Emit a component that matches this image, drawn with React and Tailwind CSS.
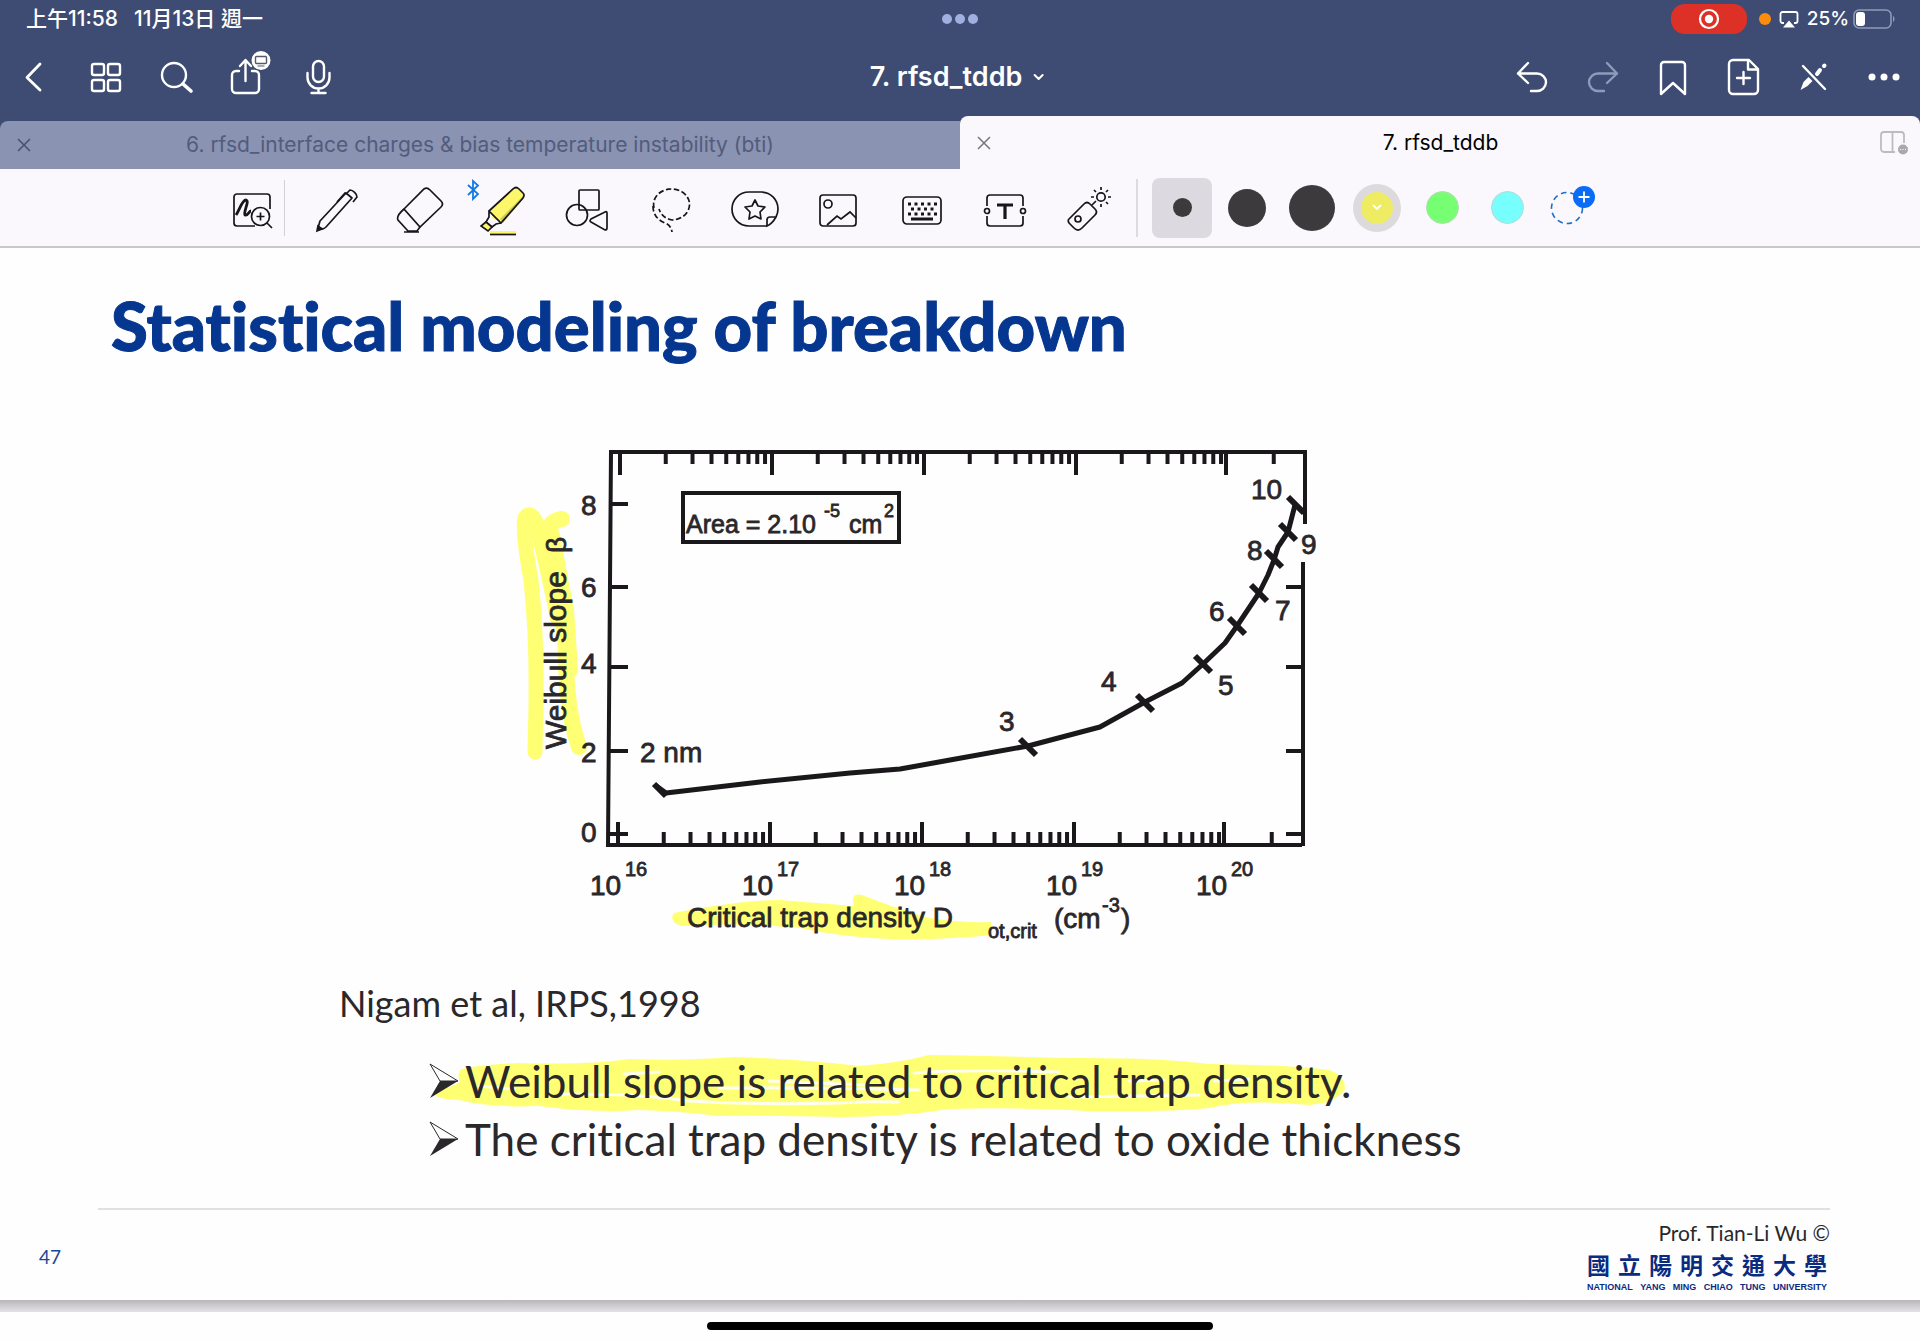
import React from "react";

const INK = "#1b181c";

/* ---------- Status bar ---------- */

function StatusBar() {
  return (
    <div className="relative flex h-[38px] items-center justify-between pl-[26px] pr-[24px] text-[19px] font-medium text-white">
      <div className="flex gap-[16px] text-[21px]">
        <span>上午11:58</span>
        <span>11月13日 週一</span>
      </div>
      <div className="absolute inset-x-0 top-[14px] flex justify-center gap-[3px]">
        <span className="size-[10px] rounded-full bg-[#9fb0e0]" />
        <span className="size-[10px] rounded-full bg-[#9fb0e0]" />
        <span className="size-[10px] rounded-full bg-[#9fb0e0]" />
      </div>
      <div className="flex items-center">
        <span className="flex h-[30px] w-[76px] items-center justify-center rounded-[14px] bg-[#dd3127]">
          <svg width="22" height="22" viewBox="0 0 22 22" aria-label="Recording">
            <circle cx="11" cy="11" r="9" fill="none" stroke="#fff" strokeWidth="2.2" />
            <circle cx="11" cy="11" r="4.2" fill="#fff" />
          </svg>
        </span>
        <span className="ml-[12px] size-[12px] rounded-full bg-[#fb8c0c]" />
        <svg className="ml-[8px]" width="20" height="18" viewBox="0 0 20 18" aria-hidden="true">
          <path d="M5 13H3.5A2 2 0 0 1 1.5 11V4a2 2 0 0 1 2-2h13a2 2 0 0 1 2 2v7a2 2 0 0 1-2 2H15" fill="none" stroke="#fff" strokeWidth="1.8" />
          <path d="M10 10.5 16 17.500H4Z" fill="#fff" />
        </svg>
        <span className="ml-[8px]">25%</span>
        <svg className="ml-[4px]" width="43" height="20" viewBox="0 0 43 20" aria-label="Battery">
          <rect x="1" y="1" width="37" height="18" rx="5" fill="none" stroke="#8f9ab9" strokeWidth="1.6" />
          <rect x="3" y="3" width="9" height="14" rx="3" fill="#fff" />
          <path d="M40 7c2 1 2 5 0 6Z" fill="#8f9ab9" />
        </svg>
      </div>
    </div>
  );
}

/* ---------- Navigation bar ---------- */

function NavButton({ label, children, dim = false }) {
  return (
    <button
      type="button"
      aria-label={label}
      className={dim ? "flex h-[48px] w-[70px] items-center justify-center text-[#8f9abb]" : "flex h-[48px] w-[70px] items-center justify-center text-white"}
    >
      <svg className="overflow-visible" width="48" height="48" viewBox="0 0 48 48" fill="none" stroke="currentColor" strokeWidth="2.4" strokeLinecap="round" strokeLinejoin="round" aria-hidden="true">
        {children}
      </svg>
    </button>
  );
}

function NavBar() {
  return (
    <nav className="relative flex h-[78px] items-center justify-between pr-[2px]">
      <div className="flex">
        <NavButton label="Back">
          <path d="M29 11 16 24.500 29 37" strokeWidth="2.8" />
        </NavButton>
        <NavButton label="Thumbnails">
          <rect x="11" y="11" width="12" height="11" rx="2" />
          <rect x="27" y="11" width="12" height="11" rx="2" />
          <rect x="11" y="27" width="12" height="11" rx="2" />
          <rect x="27" y="27" width="12" height="11" rx="2" />
        </NavButton>
        <NavButton label="Search">
          <circle cx="23" cy="22" r="12" />
          <path d="m32 31 8 7" strokeWidth="3.600" />
        </NavButton>
        <NavButton label="Share">
          <path d="M18 18h-3a4 4 0 0 0-4 4v14a4 4 0 0 0 4 4h19a4 4 0 0 0 4-4V22a4 4 0 0 0-4-4h-3" />
          <path d="M24.500 28V8M19 13l5.500-6 5.500 6" />
          <circle cx="40" cy="7.500" r="9.500" fill="#fff" stroke="none" />
          <rect x="34.500" y="3.500" width="11" height="7" rx="1" stroke="#55596a" strokeWidth="1.400" />
          <path d="M37 13h6" stroke="#55596a" strokeWidth="1.200" />
        </NavButton>
        <NavButton label="Record">
          <rect x="22" y="8" width="11" height="21" rx="5.500" />
          <path d="M16.500 20v4.500a11 11 0 0 0 22 0V20M27.500 35.500V39M20.500 40h14" />
        </NavButton>
      </div>
      <button type="button" className="absolute inset-y-0 left-1/2 flex -translate-x-1/2 items-center gap-[10px] pr-[6px] text-[27px] font-semibold text-white">
        7. rfsd_tddb
        <svg width="12" height="8" viewBox="0 0 12 8" fill="none" stroke="#fff" strokeWidth="2" strokeLinecap="round" strokeLinejoin="round" aria-hidden="true">
          <path d="m2 2 4 4 4-4" />
        </svg>
      </button>
      <div className="flex">
        <NavButton label="Undo">
          <path d="M19 10 9 20.500 19 30M9 20.500h19a9 9 0 0 1 9 9 9 9 0 0 1-9 8.500h-6" />
        </NavButton>
        <NavButton label="Redo" dim>
          <path d="M28 10 38 20.500 28 30M38 20.500H19a9 9 0 0 0-9 9A9 9 0 0 0 19 38h6" />
        </NavButton>
        <NavButton label="Bookmark">
          <path d="M12 12a3 3 0 0 1 3-3h18a3 3 0 0 1 3 3v29L24 30 12 41Z" />
        </NavButton>
        <NavButton label="Add page">
          <path d="M30 7H14a4 4 0 0 0-4 4v26a4 4 0 0 0 4 4h21a4 4 0 0 0 4-4V16ZM29 8v8.500h9M24.500 19v12M18 25h13" />
        </NavButton>
        <NavButton label="Read only mode">
          <path d="m14 13 22 23" />
          <path d="m11.500 37 3-8 5-5 4 4-5 5Z" fill="currentColor" stroke="none" />
          <path d="M28 21l3-4M35 13l.5-.5" strokeWidth="4" />
        </NavButton>
        <NavButton label="More">
          <g fill="currentColor" stroke="none">
            <circle cx="13" cy="24" r="3.500" />
            <circle cx="25" cy="24" r="3.500" />
            <circle cx="37" cy="24" r="3.500" />
          </g>
        </NavButton>
      </div>
    </nav>
  );
}

/* ---------- Document tabs ---------- */

function CloseIcon() {
  return (
    <svg width="14" height="14" viewBox="0 0 14 14" fill="none" stroke="currentColor" strokeWidth="1.500" aria-hidden="true">
      <path d="m1 1 12 12M13 1 1 13" />
    </svg>
  );
}

function Tabs() {
  return (
    <div className="flex h-[53px] items-end text-[21px]">
      <div className="flex h-[48px] w-1/2 items-center rounded-tl-[8px] bg-[#8a93b1] px-[17px] text-[#525c7d]">
        <button type="button" aria-label="Close tab" className="text-[#474f6b]"><CloseIcon /></button>
        <button type="button" className="flex-1 pr-[14px]">6. rfsd_interface charges &amp; bias temperature instability (bti)</button>
      </div>
      <div className="flex h-full w-1/2 items-center rounded-t-[8px] bg-[#faf8fc] pl-[17px] pr-[11px] text-black">
        <button type="button" aria-label="Close tab" className="text-[#77757a]"><CloseIcon /></button>
        <button type="button" className="flex-1 pl-[10px]">7. rfsd_tddb</button>
        <button type="button" aria-label="Tab options">
          <svg width="29" height="24" viewBox="0 0 29 24" fill="none" stroke="#bdbbc0" strokeWidth="1.800" aria-hidden="true">
            <path d="M15 21H4a3 3 0 0 1-3-3V4a3 3 0 0 1 3-3h17a3 3 0 0 1 3 3v8M12.500 1v20" />
            <circle cx="23" cy="18.500" r="5" fill="#aaa8ae" stroke="none" />
            <path d="M20 18.500h1m1.500 0h1m1.500 0h1" stroke="#fff" strokeWidth="1.200" />
          </svg>
        </button>
      </div>
    </div>
  );
}

/* ---------- Tool bar ---------- */

const TOOLS = [
  {
    label: "Zoom window",
    art: (
      <>
        <path d="M41 27V15a3 3 0 0 0-3-3H8a3 3 0 0 0-3 3v26a3 3 0 0 0 3 3h18" />
        <path d="M7 33c3-4 6-15 10-15 4 1-3 12-1 15 3 1 4-4 6-4" strokeWidth="2.800" />
        <circle cx="31.500" cy="34.500" r="9" />
        <path d="m38 41 5 5M27.500 34.500h8M31.500 30.500v8" />
      </>
    ),
  },
  {
    label: "Pen",
    art: (
      <>
        <path d="m5 46 2-7L33 11l6 5-26 29q-3 3-6 1Z" strokeLinejoin="round" />
        <path d="m34 11 3-3c3 0 7 4 7 7l-4 5M24 20l8-9 2 1" />
        <path d="m4 49 1-5 4 3Z" fill="#17151a" />
      </>
    ),
  },
  {
    label: "Eraser",
    art: (
      <>
        <path d="M8 27 28 7q3-2 6 1l11 11q3 3 0 6L24 45Z" />
        <path d="M8 27q-8 7-6 11l10 11h9l3-4M8 50h15" />
      </>
    ),
  },
  {
    label: "Highlighter",
    art: (
      <>
        <path d="M10 28 33 7q3-3 6 0l4 4q2 2 0 5L21 39l-8-2Z" fill="#fbf66a" stroke="none" />
        <path d="m20 37 23-23v3L23 41Z" fill="#cfc957" stroke="none" />
        <path d="M9 29 33 7q3-3 6 0l4 4q2 2 0 5L21 41ZM9 29v6l-3 5 6 5 4-3 5-1" />
        <path d="m6 40-5 4 7 5 4-4Z" fill="#fbf66a" />
        <path d="M10 49h26v3H10Z" fill="#fbf66a" stroke="none" />
        <path d="M10 52.500h26" />
      </>
    ),
  },
  {
    label: "Shapes",
    art: (
      <>
        <rect x="16" y="8" width="20" height="20" rx="1" />
        <circle cx="14" cy="33" r="10.500" />
        <path d="M28 37q-2 2 0 3l14 8q2 0 2-2V31q0-2-2-1Z" />
      </>
    ),
  },
  {
    label: "Lasso",
    art: (
      <g strokeDasharray="5.500 2.500">
        <path d="M7 26A18 15.500 0 1 1 25 38Q15 36 12 27" />
        <path d="M6 24q0 12 12 17 6 2 7 9" />
      </g>
    ),
  },
  {
    label: "Stickers",
    art: (
      <>
        <path d="M36 44H18C8 44 1 36 1 27s7-17 17-17h12c10 0 17 8 17 17 0 4-1 6-2 8Q41 42 36 44v-6q0-3 3-3h6" />
        <path d="m24 18 3 6 7 1-5 5 1 7-6-3-6 3 1-7-5-5 7-1Z" strokeLinejoin="round" />
      </>
    ),
  },
  {
    label: "Image",
    art: (
      <>
        <rect x="6" y="13" width="36" height="31" rx="3" />
        <circle cx="14" cy="22" r="4" />
        <path d="m13 43 10-9 4 3 9-7 6 6" />
      </>
    ),
  },
  {
    label: "Keyboard",
    art: (
      <>
        <rect x="5" y="15" width="38" height="27" rx="4" />
        <path d="M10 22h29M10 32h29" strokeWidth="3" strokeDasharray="3 3.500" />
        <path d="M13 27h23" strokeWidth="3" strokeDasharray="3 3.500" />
        <path d="M13 37h22" strokeWidth="3" />
      </>
    ),
  },
  {
    label: "Text",
    art: (
      <>
        <path d="M6 24v-8q0-3 3-3h30q3 0 3 3v8M6 34v7q0 3 3 3h30q3 0 3-3v-7" />
        <circle cx="6" cy="29" r="2.500" />
        <circle cx="42" cy="29" r="2.500" />
        <path d="M16 23h16M24 23v14" strokeWidth="3.200" />
      </>
    ),
  },
  {
    label: "Laser pointer",
    art: (
      <>
        <path d="m4 37 15-15q3-3 6 0l5 5q3 3 0 6L17 46q-4 4-8 0l-4-4q-3-3-1-5Z" />
        <circle cx="13" cy="37" r="3" />
        <circle cx="36" cy="15" r="4.200" />
        <path d="M36 5v3M36 22v3M26 15h3M43 15h3M29 8l2 2M43 8l-2 2M43 22l-2-2M27 23l4-4" />
      </>
    ),
  },
];

function Swatch({ label, children }) {
  return (
    <button type="button" aria-label={label} className="flex items-center justify-center">
      {children}
    </button>
  );
}

function ToolBar() {
  return (
    <div className="flex h-[79px] items-center border-b-2 border-[#c9c7cc] bg-[#faf8fc]">
      <div className="relative ml-[11%] grid h-full w-[47.9%] grid-cols-11 items-center pt-[4px]">
        {TOOLS.map((tool) => (
          <button key={tool.label} type="button" aria-label={tool.label} className="flex justify-center">
            <svg width="48" height="56" viewBox="0 0 48 56" fill="none" stroke="#17151a" strokeWidth="1.700" aria-hidden="true">
              {tool.art}
            </svg>
          </button>
        ))}
        <span className="absolute left-[73px] h-[56px] w-px bg-[#d2d0d5]" />
        <svg className="absolute left-[255px] top-[10px]" width="14" height="22" viewBox="0 0 14 22" fill="none" stroke="#1478e6" strokeWidth="1.800" aria-label="Bluetooth">
          <path d="m2 6 10 9-5 5V2l5 4.500L2 16" />
        </svg>
      </div>
      <span className="ml-[5px] h-[58px] w-[2px] bg-[#dddbe0]" />
      <div className="ml-[12px] grid h-[60px] w-[23.7%] grid-cols-7">
        <Swatch label="Fine stroke">
          <span className="flex size-[60px] items-center justify-center rounded-[8px] bg-[#dcdae0]">
            <span className="size-[19px] rounded-full bg-[#3d3a3e]" />
          </span>
        </Swatch>
        <Swatch label="Medium stroke"><span className="size-[38px] rounded-full bg-[#3d3a3e]" /></Swatch>
        <Swatch label="Thick stroke"><span className="size-[46px] rounded-full bg-[#3d3a3e]" /></Swatch>
        <Swatch label="Yellow">
          <span className="flex size-[48px] items-center justify-center rounded-full bg-[#dcdadd]">
            <span className="flex size-[32px] items-center justify-center rounded-full bg-[#eeec63]">
              <svg width="10" height="7" viewBox="0 0 10 7" fill="none" stroke="#fff" strokeWidth="1.800" aria-hidden="true"><path d="m1 1 4 4 4-4" /></svg>
            </span>
          </span>
        </Swatch>
        <Swatch label="Green"><span className="size-[33px] rounded-full border border-[#b9d8b8] bg-[#77ff73]" /></Swatch>
        <Swatch label="Cyan"><span className="size-[33px] rounded-full border border-[#b5d8da] bg-[#77fffe]" /></Swatch>
        <Swatch label="Add colour">
          <svg width="48" height="48" viewBox="0 0 48 48" fill="none" aria-hidden="true">
            <circle cx="19" cy="24" r="15.500" stroke="#1f6fc4" strokeWidth="1.600" strokeDasharray="5.500 4" />
            <circle cx="36" cy="13" r="11" fill="#0a6cf5" />
            <path d="M30.500 13h11M36 7.500v11" stroke="#fff" strokeWidth="1.800" />
          </svg>
        </Swatch>
      </div>
    </div>
  );
}

/* ---------- Chart ---------- */

const DECADE = 152;
const minorTicks = (start, decades) => {
  const xs = [];
  for (let d = 0; d < decades; d += 1) {
    for (let k = 2; k < 10; k += 1) xs.push(start + d * DECADE + DECADE * Math.log10(k));
  }
  xs.push(start + decades * DECADE + DECADE * Math.log10(2));
  return xs;
};

const POINTS = [
  { x: 528, y: 317, text: "3", tx: 499, ty: 301 },
  { x: 645, y: 273, text: "4", tx: 601, ty: 261 },
  { x: 703, y: 234, text: "5", tx: 718, ty: 265 },
  { x: 737, y: 196, text: "6", tx: 709, ty: 191 },
  { x: 759, y: 163, text: "7", tx: 775, ty: 190 },
  { x: 774, y: 129, text: "8", tx: 747, ty: 130 },
  { x: 788, y: 102, text: "9", tx: 801, ty: 124 },
  { x: 796, y: 75, text: "10", tx: 751, ty: 69 },
];

const Y_LABELS = [
  { text: "8", tick: 74, base: 85 },
  { text: "6", tick: 157, base: 167 },
  { text: "4", tick: 237, base: 243 },
  { text: "2", tick: 321, base: 332 },
  { text: "0", tick: 404, base: 412 },
];

const X_LABELS = [
  { x: 90, exp: "16" },
  { x: 242, exp: "17" },
  { x: 394, exp: "18" },
  { x: 546, exp: "19" },
  { x: 696, exp: "20" },
];

function WeibullChart() {
  return (
    <svg width="840" height="520" viewBox="0 0 840 520" className="font-['Liberation_Sans',sans-serif]" role="img" aria-label="Weibull slope against critical trap density">
      <g fill="none" stroke="#ffff73" strokeLinecap="round" strokeLinejoin="round">
        <path d="M35 322 36 275Q37 205 31 150 22 100 25 88 30 80 36 92 48 140 58 190" strokeWidth="15" />
        <path d="M62 89Q44 92 49 112 62 160 66 225 66 280 79 317" strokeWidth="16" />
        <path d="M52 105Q60 150 66 180L70 240" strokeWidth="16" />
      </g>
      <path d="M174 483Q240 470 280 470 330 474 354 476 350 462 362 465 400 480 430 488 460 493 491 492L491 505Q450 510 390 509 340 507 300 498 240 492 182 496 168 492 174 483Z" fill="#ffff73" />

      <g fill="none" stroke={INK} strokeWidth="4">
        <path d="M805 94V22H111L108 415H802M803 132V416" />
        <rect x="183" y="63" width="216" height="49" />
      </g>
      <g stroke={INK} strokeWidth="4">
        {Y_LABELS.map((l) => <path key={l.text} d={`M110 ${l.tick}H128`} />)}
        {Y_LABELS.slice(1).map((l) => <path key={l.text} d={`M786 ${l.tick}H803`} />)}
        {[118, 270, 422, 574, 724].map((x) => <path key={x} d={`M${x} 392V415M${x + 2} 22V45`} />)}
        {minorTicks(118, 4).map((x) => <path key={x} d={`M${x} 402V415M${x + 2} 22V34`} />)}
      </g>

      <path d="M155 355 166 363 260 352 350 343 400 339 450 330 528 316 600 297 645 272 682 253 703 234 725 213 737 196 759 163 768 145 774 130 778 117 788 102 795 75" fill="none" stroke={INK} strokeWidth="5" strokeLinejoin="round" />
      <path d="m154 354 12 12" stroke={INK} strokeWidth="6" />
      {POINTS.map((p) => (
        <path key={p.text} d={`M${p.x - 8} ${p.y - 8}L${p.x + 8} ${p.y + 8}`} stroke={INK} strokeWidth="6" />
      ))}

      <g fill="#2a272b" stroke="#2a272b" strokeWidth="0.8" fontSize="28">
        {Y_LABELS.map((l) => <text key={l.text} x="81" y={l.base}>{l.text}</text>)}
        {POINTS.map((p) => <text key={p.text} x={p.tx} y={p.ty}>{p.text}</text>)}
        <text x="140" y="332">2 nm</text>
        {X_LABELS.map((l) => (
          <g key={l.exp}>
            <text x={l.x} y="465">10</text>
            <text x={l.x + 35} y="446" fontSize="20">{l.exp}</text>
          </g>
        ))}
        <text x="186" y="103" fontSize="25">Area = 2.10</text>
        <text x="324" y="87" fontSize="18">-5</text>
        <text x="349" y="103" fontSize="25">cm</text>
        <text x="384" y="87" fontSize="18">2</text>
        <text x="187" y="497">Critical trap density D</text>
        <text x="488" y="508" fontSize="20">ot,crit</text>
        <text x="554" y="498">(cm</text>
        <text x="602" y="482" fontSize="20">-3</text>
        <text x="621" y="498">)</text>
        <text transform="translate(66 319) rotate(-90)" fontSize="30">Weibull slope</text>
        <text transform="translate(66 123) rotate(-90)">β</text>
      </g>
    </svg>
  );
}

/* ---------- Slide ---------- */

function ArrowBullet() {
  return (
    <svg className="relative shrink-0" width="30" height="36" viewBox="0 0 30 36" aria-hidden="true">
      <path d="M1 1 29 18H11Z" fill="#fff" stroke="#2a282b" strokeWidth="1" />
      <path d="M29 18 1 35 11 18Z" fill="#2a282b" />
    </svg>
  );
}

function Highlight() {
  return (
    <svg className="absolute left-0 top-0" width="924" height="68" viewBox="430 1053 924 68" aria-hidden="true">
      <path
        d="M461 1071Q470 1066 520 1064 590 1066 630 1060 680 1062 735 1058 800 1060 860 1067 900 1064 930 1056 1000 1057 1060 1059 1160 1058 1210 1065 1290 1066 1330 1071 1346 1076 1346 1090 1338 1104 1310 1106 1250 1100 1210 1109 1170 1113 1090 1112 1020 1108 950 1110 900 1118 840 1118 770 1116 720 1117 680 1112 640 1111 590 1114 540 1107 490 1109 460 1101 430 1100 438 1092 455 1087 461 1083 458 1076 461 1071Z"
        fill="#ffff73"
      />
      <g fill="none" stroke="#fffff0" strokeWidth="3" strokeLinecap="round">
        <path d="M480 1087 515 1090M560 1095Q640 1094 690 1102 760 1106 840 1104 870 1102 900 1103M625 1075 660 1073M770 1082 870 1086M720 1089Q800 1088 920 1091M915 1074Q960 1070 1060 1073M1130 1082 1165 1081M1070 1098 1200 1096M1215 1082 1250 1080" />
      </g>
    </svg>
  );
}

function Slide() {
  return (
    <main className="bg-[#fefefe] font-['Lato',sans-serif] text-[#2a282b] [font-variant-ligatures:none]">
      <h1 className="pl-[111px] pt-[37px] text-[67px] font-black leading-[80px] text-[#053690] [-webkit-text-stroke:1px_#053690]">Statistical modeling of breakdown</h1>
      <div className="pl-[500px] pt-[65px]">
        <WeibullChart />
      </div>
      <p className="pl-[339px] pt-[29px] text-[36px] leading-[48px]">Nigam et al, IRPS,1998</p>
      <ul className="pl-[429px] pt-[25px] text-[44px] leading-[58px]">
        <li className="relative flex items-center gap-[6px]">
          <Highlight />
          <ArrowBullet />
          <span className="relative">Weibull slope is related to critical trap density.</span>
        </li>
        <li className="flex items-center gap-[6px]">
          <ArrowBullet />
          <span>The critical trap density is related to oxide thickness</span>
        </li>
      </ul>
      <footer className="ml-[39px] mr-[90px] mt-[40px] flex h-[92px] items-start">
        <span className="w-[59px] pt-[37px] text-[19px] leading-[24px] text-[#1b4798]">47</span>
        <div className="flex flex-1 flex-col items-end border-t-2 border-[#e0dfe1] pt-[10px]">
          <p className="text-[21px] leading-[26px]">Prof. Tian-Li Wu ©</p>
          <div className="mr-[3px] w-[240px] font-bold text-[#0b2b80]">
            <p className="flex justify-between font-['Noto_Sans_CJK_TC',sans-serif] text-[23px] leading-[36px]">
              {[..."國立陽明交通大學"].map((c) => <span key={c}>{c}</span>)}
            </p>
            <p className="flex justify-between font-['Liberation_Sans',sans-serif] text-[9px] leading-[10px]">
              {["NATIONAL", "YANG", "MING", "CHIAO", "TUNG", "UNIVERSITY"].map((w) => <span key={w}>{w}</span>)}
            </p>
          </div>
        </div>
      </footer>
    </main>
  );
}

export default function App() {
  return (
    <div className="min-h-screen bg-[#fefefe] font-['Inter','Noto_Sans_CJK_TC',sans-serif]">
      <header className="bg-[#3e4c73]">
        <StatusBar />
        <NavBar />
        <Tabs />
      </header>
      <ToolBar />
      <Slide />
      <div className="h-[12px] bg-linear-to-b from-[#b9b7bb] to-[#e4e2e6]" />
      <div className="mx-auto mt-[10px] h-[8px] w-[506px] rounded-full bg-black" />
    </div>
  );
}
